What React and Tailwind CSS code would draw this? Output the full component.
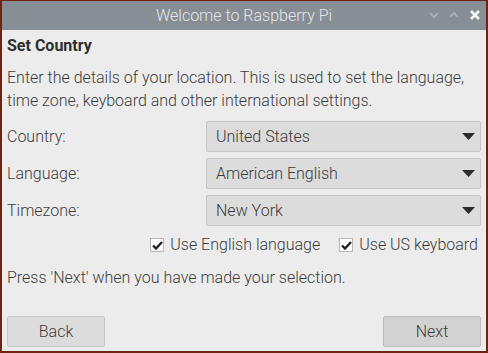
import React, { useState } from 'react';

const Caret = () => (
  <svg width="13" height="7" viewBox="0 0 13 7" className="shrink-0">
    <polygon points="0,0 13,0 6.5,7" fill="#2d2d2d" />
  </svg>
);

const Select = ({ value }) => (
  <div className="h-[31px] w-[275px] flex items-center justify-between pl-[9px] pr-[5px] bg-[#dcdcdc] border border-[#c6c6c6] rounded-[2px] text-[#3a3a3a]">
    <span>{value}</span>
    <Caret />
  </div>
);

const Check = ({ label, checked, onToggle }) => (
  <label className="flex items-center gap-[6px] cursor-pointer" onClick={onToggle}>
    <span className="w-[14px] h-[14px] bg-white border border-[#b5b5b5] flex items-center justify-center">
      {checked && (
        <svg width="11" height="9" viewBox="0 0 11 9">
          <path d="M1 4.5 L4 7.5 L10 1" stroke="#222" strokeWidth="2.4" fill="none" />
        </svg>
      )}
    </span>
    <span>{label}</span>
  </label>
);

const App = () => {
  const [english, setEnglish] = useState(true);
  const [usKeyboard, setUsKeyboard] = useState(true);

  const rows = [
    ['Country:', 'United States'],
    ['Language:', 'American English'],
    ['Timezone:', 'New York'],
  ];

  return (
    <div className="w-[488px] h-[353px] bg-[#6e2410] pl-[2px] pr-[2px] pt-[1px] font-['Roboto',sans-serif] font-light text-[16px]">
      <div className="w-[484px] h-[350px] flex flex-col bg-[#ececec]">
        {/* title bar */}
        <div className="h-[29px] bg-[#888e96] flex items-center relative">
          <div className="flex-1 text-center text-[#e4e6e9]">Welcome to Raspberry Pi</div>
          <div className="absolute right-[5px] top-[8px] flex items-center gap-[10px]">
            <svg width="10" height="10" viewBox="0 0 10 10"><path d="M1 3 L5 7 L9 3" stroke="#a7acb3" strokeWidth="2" fill="none" /></svg>
            <svg width="10" height="10" viewBox="0 0 10 10"><path d="M1 7 L5 3 L9 7" stroke="#a7acb3" strokeWidth="2" fill="none" /></svg>
            <svg width="12" height="12" viewBox="0 0 12 12"><path d="M2 2 L10 10 M10 2 L2 10" stroke="#f4f5f6" strokeWidth="2.6" fill="none" /></svg>
          </div>
        </div>

        <div className="flex-1 flex flex-col px-[5px] text-[#3c3c3c]">
          <div className="pt-[6px] leading-[20px] font-bold text-[#2e2e2e]">Set Country</div>
          <p className="mt-[10px] leading-[23px]">
            Enter the details of your location. This is used to set the language, time zone, keyboard and other international settings.
          </p>

          <div className="mt-[9px] flex flex-col gap-[6px]">
            {rows.map(([label, value]) => (
              <div key={label} className="flex items-center justify-between">
                <span>{label}</span>
                <Select value={value} />
              </div>
            ))}
          </div>

          <div className="mt-[9px] h-[20px] flex justify-end gap-[19px] pr-[3px]">
            <Check label="Use English language" checked={english} onToggle={() => setEnglish(!english)} />
            <Check label="Use US keyboard" checked={usKeyboard} onToggle={() => setUsKeyboard(!usKeyboard)} />
          </div>

          <p className="mt-[13px] leading-[20px]">Press 'Next' when you have made your selection.</p>

          <div className="mt-auto mb-[4px] flex justify-between">
            <button className="w-[98px] h-[31px] bg-[#dcdcdc] border border-[#c6c6c6] rounded-[2px] text-[#3c3c3c]">Back</button>
            <button className="w-[98px] h-[31px] bg-[#d2d2d2] border border-[#bcbcbc] rounded-[2px] text-[#3c3c3c]">Next</button>
          </div>
        </div>
      </div>
    </div>
  );
};

export default App;
